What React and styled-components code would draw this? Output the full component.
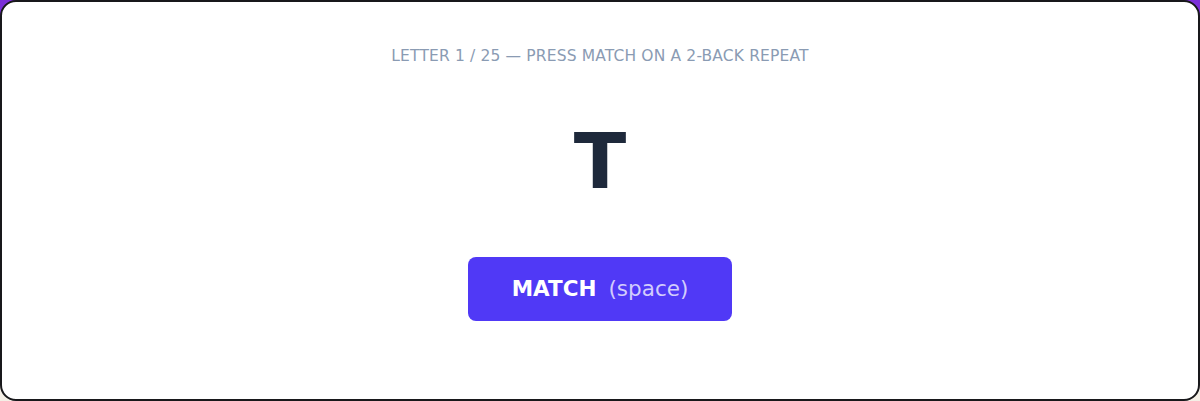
import React from "react";
import styled, { createGlobalStyle } from "styled-components";

const Global = createGlobalStyle`
  html, body {
    margin: 0;
    padding: 0;
    height: 401px;
    overflow: hidden;
  }
  body {
    background: linear-gradient(180deg, #7b2fd8 0%, #7b2fd8 30%, #f4efe6 70%, #f4efe6 100%);
    font-family: "DejaVu Sans", "Noto Sans", sans-serif;
  }
`;

const Card = styled.div`
  box-sizing: border-box;
  width: 1200px;
  height: 401px;
  background: #ffffff;
  border: 2px solid #18181b;
  border-radius: 16px;
  display: flex;
  flex-direction: column;
  align-items: center;
  padding-top: 45px;
`;

const Caption = styled.div`
  font-size: 15.5px;
  line-height: 18px;
  letter-spacing: 0.15px;
  color: #8a9bb3;
  text-transform: uppercase;
`;

const Letter = styled.div`
  margin-top: 57.5px;
  font-size: 77px;
  line-height: 77px;
  font-weight: 700;
  color: #1e293b;
`;

const MatchButton = styled.button`
  margin-top: 57px;
  box-sizing: border-box;
  width: 264px;
  height: 64px;
  border: none;
  border-radius: 8px;
  background: #5039f6;
  color: #ffffff;
  font-family: "DejaVu Sans", sans-serif;
  font-size: 21.5px;
  display: flex;
  align-items: center;
  justify-content: center;
  gap: 12px;
  cursor: pointer;
`;

const Label = styled.span`
  font-weight: 700;
`;

const Hint = styled.span`
  font-weight: 400;
  color: rgba(255, 255, 255, 0.75);
`;

export default function App() {
  return (
    <>
      <Global />
      <Card>
        <Caption>Letter 1 / 25 — Press match on a 2-back repeat</Caption>
        <Letter>T</Letter>
        <MatchButton>
          <Label>MATCH</Label>
          <Hint>(space)</Hint>
        </MatchButton>
      </Card>
    </>
  );
}
